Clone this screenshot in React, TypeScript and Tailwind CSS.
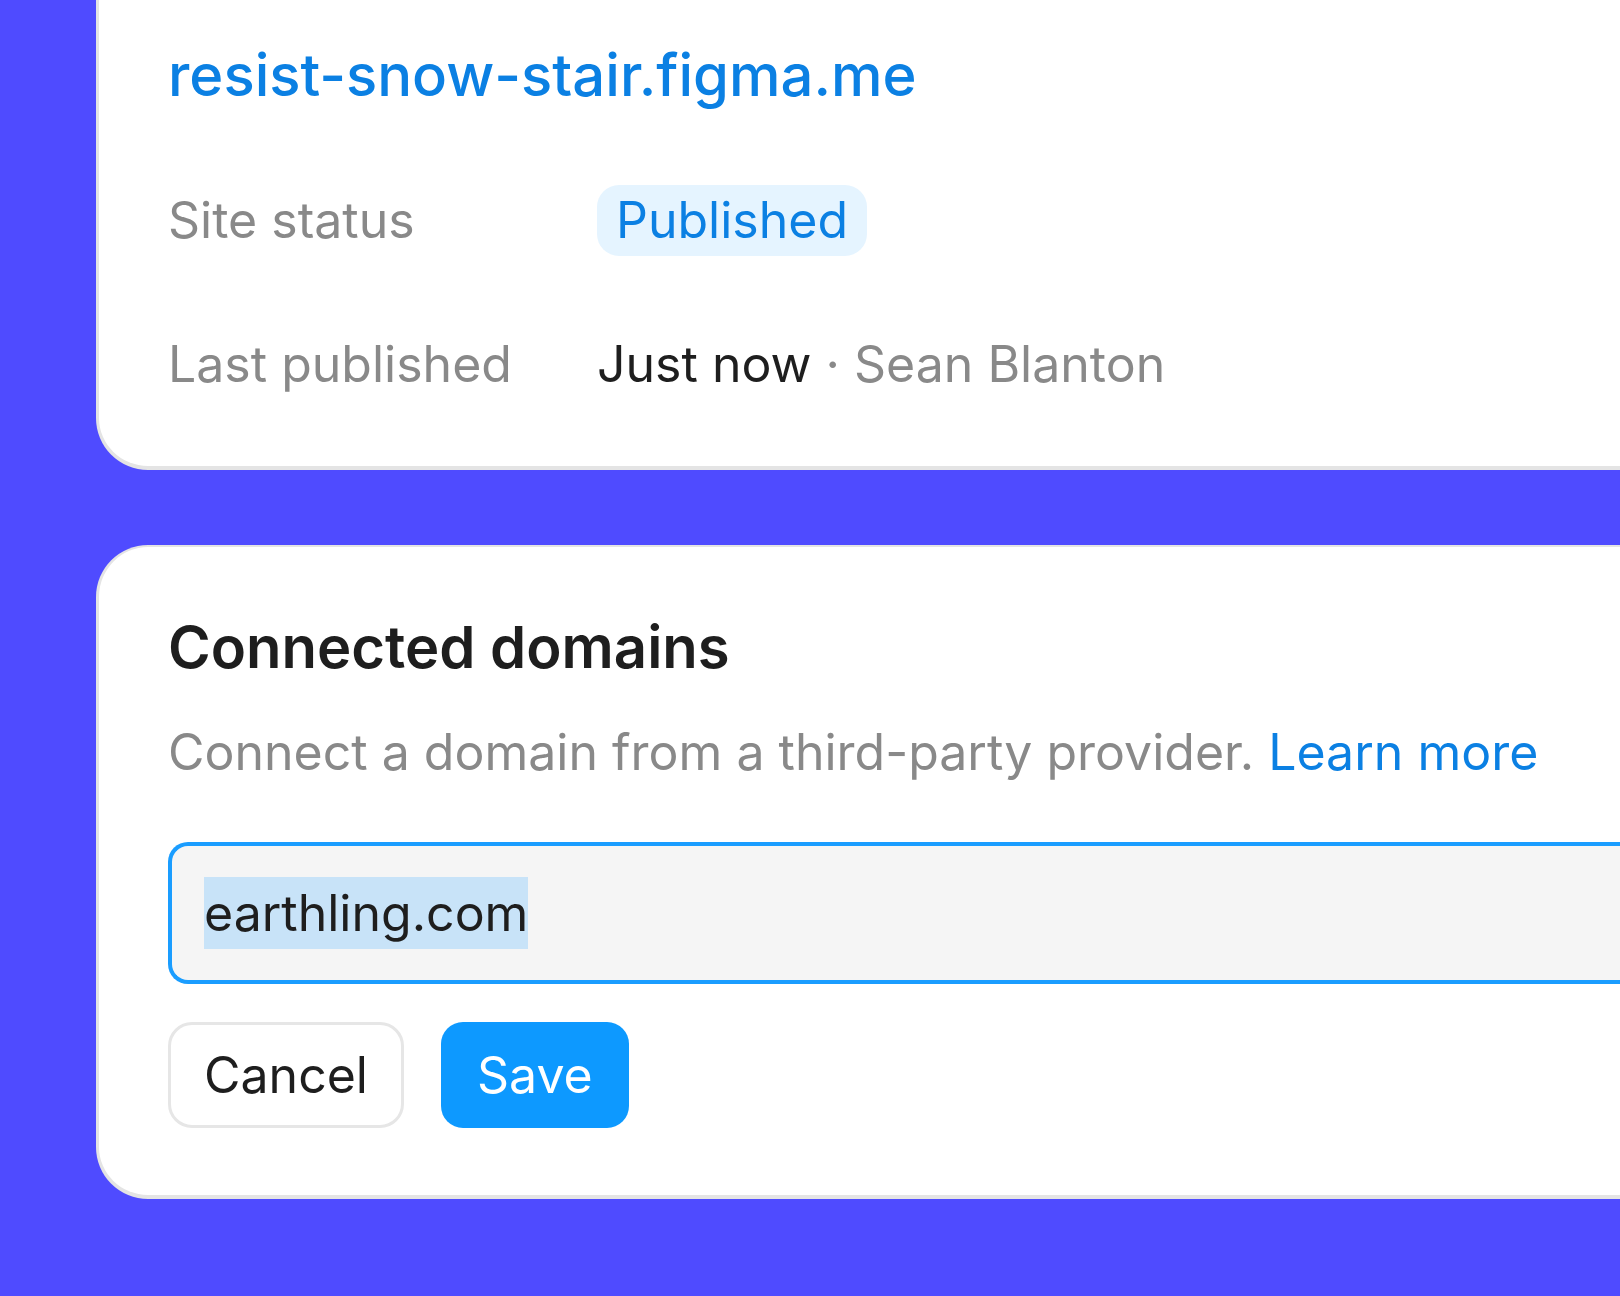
const font = { fontFamily: "Inter, 'Noto Sans', sans-serif" };

function InfoRow({ label, children, height }: { label: string; children: React.ReactNode; height: string }) {
  return (
    <div className={`flex items-center ${height}`}>
      <span className="w-[429px] shrink-0 text-[50px] leading-none text-[#898989]">{label}</span>
      {children}
    </div>
  );
}

export default function App() {
  return (
    <div className="h-[1296px] w-full overflow-hidden bg-[#4f4bff] pl-[96px]" style={font}>
      {/* Site card (top cut off) */}
      <div className="flex h-[470px] flex-col rounded-bl-[52px] border-b-4 border-l-[3px] border-[#e4e4e4] bg-white pl-[69px]">
        <div className="flex h-[150px] items-center">
          <span className="text-[58px] font-medium leading-none text-[#0b80e3]">resist-snow-stair.figma.me</span>
        </div>
        <InfoRow label="Site status" height="h-[140px]">
          <span className="flex h-[71px] items-center rounded-[22px] bg-[#e5f4ff] px-[19px] text-[50px] leading-none text-[#0b80e3]">
            Published
          </span>
        </InfoRow>
        <InfoRow label="Last published" height="h-[148px]">
          <span className="text-[50px] leading-none text-[#1e1e1e]">
            Just now <span className="text-[#898989]">· Sean Blanton</span>
          </span>
        </InfoRow>
      </div>

      {/* Connected domains card */}
      <div className="mt-[75px] flex flex-col rounded-l-[52px] border-b-4 border-l-[3px] border-t-2 border-[#e4e4e4] bg-white pb-[67px] pl-[69px] pt-[70px]">
        <h2 className="flex h-[60px] items-center text-[58px] font-semibold leading-none text-[#1e1e1e]">Connected domains</h2>
        <p className="mt-[45px] flex h-[60px] items-center text-[50px] leading-none text-[#898989]">
          Connect a domain from a third-party provider.&nbsp;<span className="text-[#0b80e3]">Learn more</span>
        </p>
        <div className="mt-[60px] flex h-[142px] items-center rounded-l-[20px] border-4 border-r-0 border-[#1a9dff] bg-[#f5f5f5] pl-[32px]">
          <span className="flex h-[72px] items-center bg-[#c8e3f8] text-[50px] leading-none text-[#1e1e1e]">earthling.com</span>
        </div>
        <div className="mt-[38px] flex gap-[37px]">
          <button className="flex h-[106px] items-center rounded-[24px] border-[3px] border-[#e6e6e6] bg-white px-[33px] text-[50px] leading-none text-[#1e1e1e]">
            Cancel
          </button>
          <button className="flex h-[106px] items-center rounded-[22px] bg-[#0d99ff] px-[36px] text-[50px] leading-none text-white">
            Save
          </button>
        </div>
      </div>
    </div>
  );
}
